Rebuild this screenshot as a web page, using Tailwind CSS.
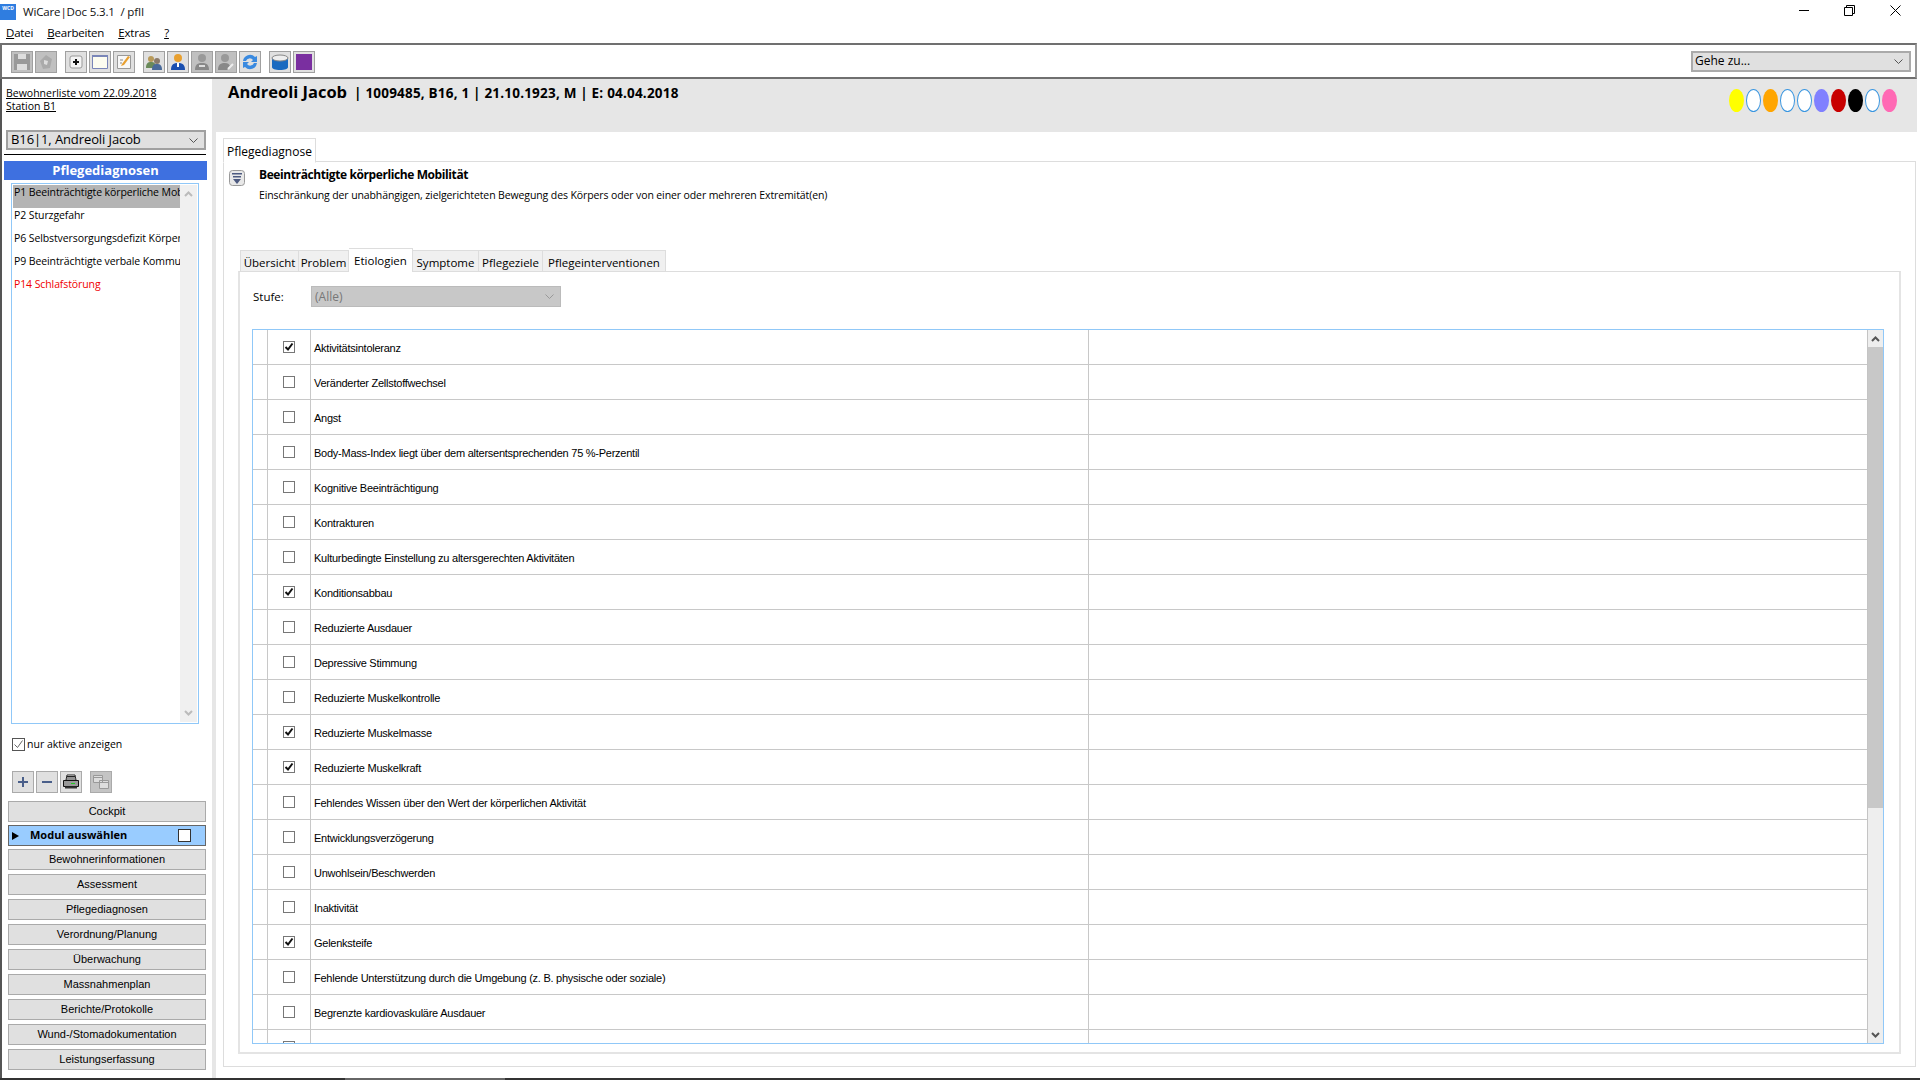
<!DOCTYPE html>
<html lang="de">
<head>
  <meta charset="UTF-8" />
  <title>WiCare|Doc</title>
  <script src="https://cdn.jsdelivr.net/npm/@tailwindcss/browser@4"></script>
</head>
<body class="w-[1920px] h-[1080px] overflow-hidden bg-white text-black font-['Open_Sans','Noto_Sans',sans-serif] text-[12px] flex flex-col">
  <!-- Title bar -->
  <div class="h-[24px] flex items-center shrink-0">
    <div class="w-[16px] h-[16px] bg-[#2f7de0] text-white text-[5px] leading-[8px] font-bold text-center">WCD</div>
    <span class="ml-[7px] text-[11.5px] tracking-[-0.15px] text-[#111]">WiCare|Doc 5.3.1&nbsp; / pfII</span>
    <div class="ml-auto flex items-center pb-[4px]">
      <div class="w-[10px] h-[1px] bg-black mr-[35px]"></div>
      <svg class="w-[11px] h-[11px] mr-[35px]" viewBox="0 0 11 11" fill="none" stroke="black"><path d="M.5 2.5h8v8h-8zM2.5 2.5v-2h8v8h-2"/></svg>
      <svg class="w-[11px] h-[11px] mr-[19px]" viewBox="0 0 11 11" fill="none" stroke="black"><path d="M.5.5l10 10M10.5.5l-10 10"/></svg>
    </div>
  </div>
  <!-- Menu -->
  <div class="h-[19px] flex items-center gap-[14px] pl-[6px] pb-[2px] text-[11.5px] tracking-[-0.2px] shrink-0">
    <span><u>D</u>atei</span><span><u>B</u>earbeiten</span><span><u>E</u>xtras</span><span><u>?</u></span>
  </div>
  <!-- Toolbar -->
  <div class="h-[36px] mr-[3px] border-2 border-[#707070] border-r-[#999] flex items-center pl-[9px] pr-[4px] gap-[2px] shrink-0">
    <div id="toolbar" class="flex items-center mt-[1px]"></div>
    <div class="ml-auto w-[220px] h-[21px] border-2 border-[#aaa] bg-[#e0e0e0] flex items-center justify-between pl-[2px] pr-[6px]">
      <span class="text-[12px]">Gehe zu...</span>
      <svg class="w-[9px] h-[5px]" viewBox="0 0 9 5" fill="none" stroke="#555"><path d="M.5.5l4 4 4-4"/></svg>
    </div>
  </div>

  <div class="flex-1 flex min-h-0 border-l-2 border-[#555]">
    <!-- Left column -->
    <aside class="w-[210px] shrink-0 flex flex-col pr-[4px]">
      <div class="pt-[8px] pl-[4px] h-[51px] text-[10.5px] leading-[13px] underline shrink-0">Bewohnerliste vom 22.09.2018<br />Station B1</div>
      <div class="ml-[4px] w-[200px] h-[20px] border-2 border-[#a0a0a0] bg-[#e0e0e0] flex items-center justify-between pl-[3px] pr-[6px] text-[13px] tracking-[-0.1px] shrink-0">
        <span>B16|1, Andreoli Jacob</span>
        <svg class="w-[9px] h-[5px]" viewBox="0 0 9 5" fill="none" stroke="#555"><path d="M.5.5l4 4 4-4"/></svg>
      </div>
      <div class="mt-[4px] ml-[2px] w-[202px] h-[1px] bg-black shrink-0"></div>
      <div class="mt-[6px] ml-[2px] w-[203px] h-[19px] bg-[#3e70e0] text-white font-bold text-[13px] leading-[18px] text-center shrink-0">Pflegediagnosen</div>
      <!-- Diagnosis list -->
      <div class="mt-[3px] ml-[9px] w-[188px] h-[541px] border border-[#90c8f8] p-[1px] flex shrink-0">
        <div class="w-[167px] text-[10.5px] tracking-[-0.1px]">
          <div class="h-[23px] bg-[#b4b4b4] pl-[1px] leading-[15px] whitespace-nowrap overflow-hidden">P1 Beeinträchtigte körperliche Mobilität</div>
          <div class="h-[23px] pl-[1px] leading-[15px] whitespace-nowrap overflow-hidden">P2 Sturzgefahr</div>
          <div class="h-[23px] pl-[1px] leading-[15px] whitespace-nowrap overflow-hidden">P6 Selbstversorgungsdefizit Körperpflege</div>
          <div class="h-[23px] pl-[1px] leading-[15px] whitespace-nowrap overflow-hidden">P9 Beeinträchtigte verbale Kommunikation</div>
          <div class="h-[23px] pl-[1px] leading-[15px] whitespace-nowrap overflow-hidden text-[#f00000]">P14 Schlafstörung</div>
        </div>
        <div class="flex-1 bg-[#f0f0f0] flex flex-col justify-between items-center py-[6px]">
          <svg class="w-[9px] h-[6px]" viewBox="0 0 9 6" fill="none" stroke="#bbb" stroke-width="2"><path d="M1 5l3.5-3.5L8 5"/></svg>
          <svg class="w-[9px] h-[6px]" viewBox="0 0 9 6" fill="none" stroke="#bbb" stroke-width="2"><path d="M1 1l3.5 3.5L8 1"/></svg>
        </div>
      </div>
      <label class="mt-[14px] ml-[10px] flex items-center h-[13px] text-[10.5px] shrink-0">
        <span class="w-[13px] h-[13px] border border-[#555] flex items-center justify-center">
          <svg class="w-[11px] h-[11px]" viewBox="0 0 11 11" fill="none" stroke="#666"><path d="M1.5 5.5l3 3 5-7"/></svg>
        </span>
        <span class="ml-[2px]">nur aktive anzeigen</span>
      </label>
      <div class="mt-[20px] ml-[10px] flex shrink-0">
        <div class="w-[22px] h-[22px] border border-[#aaa] bg-[#e0e0e0] mr-[2px] flex items-center justify-center">
          <svg class="w-[12px] h-[12px]" viewBox="0 0 12 12" fill="#4a5f8a"><path d="M5 1h2v4h4v2H7v4H5V7H1V5h4z"/></svg>
        </div>
        <div class="w-[22px] h-[22px] border border-[#aaa] bg-[#e0e0e0] mr-[2px] flex items-center justify-center">
          <svg class="w-[12px] h-[12px]" viewBox="0 0 12 12" fill="#4a5f8a"><path d="M1 5h10v2H1z"/></svg>
        </div>
        <div class="w-[22px] h-[22px] border border-[#aaa] bg-[#e0e0e0] mr-[8px] flex items-center justify-center">
          <svg class="w-[18px] h-[16px]" viewBox="0 0 18 16"><path d="M5 1h8l1 5H4z" fill="#fff" stroke="#222"/><path d="M5 2.500h8M5 4h8" stroke="#222"/><path d="M1.500 6.500h15v6h-15z" fill="#999" stroke="#111"/><path d="M3 12.500h12v2H3z" fill="#333"/><path d="M9 9h4v1H9z" fill="#2c2"/></svg>
        </div>
        <div class="w-[22px] h-[22px] border border-[#aaa] bg-[#c4c4c4] flex items-center justify-center">
          <svg class="w-[16px] h-[14px]" viewBox="0 0 16 14" fill="#ddd" stroke="#999"><path d="M.5.500h9v7h-9zM6.500 5.500h9v8h-9z"/><path d="M.5 2.500h9M6.500 7.500h9"/></svg>
        </div>
      </div>
      <!-- Module buttons -->
      <div class="mt-[8px] ml-[6px] w-[198px] flex flex-col gap-[4px] text-[11px] font-['Liberation_Sans',sans-serif]">
        <div class="h-[21px] -mb-[1px] border border-[#aaa] bg-[#e0e0e0] leading-[19px] text-center">Cockpit</div>
        <div class="h-[21px] -mb-[1px] border border-[#666] bg-[#99ccff] flex items-center font-bold font-['Open_Sans',sans-serif] text-[11px] pl-[3px]">
          <svg class="w-[7px] h-[8px]" viewBox="0 0 7 8"><path d="M0 0l7 4-7 4z" /></svg>
          <span class="ml-[11px]">Modul auswählen</span>
          <span class="ml-auto mr-[14px] w-[13px] h-[13px] bg-white border border-[#333]"></span>
        </div>
        <div class="h-[21px] border border-[#aaa] bg-[#e0e0e0] leading-[19px] text-center">Bewohnerinformationen</div>
        <div class="h-[21px] border border-[#aaa] bg-[#e0e0e0] leading-[19px] text-center">Assessment</div>
        <div class="h-[21px] border border-[#aaa] bg-[#e0e0e0] leading-[19px] text-center">Pflegediagnosen</div>
        <div class="h-[21px] border border-[#aaa] bg-[#e0e0e0] leading-[19px] text-center">Verordnung/Planung</div>
        <div class="h-[21px] border border-[#aaa] bg-[#e0e0e0] leading-[19px] text-center">Überwachung</div>
        <div class="h-[21px] border border-[#aaa] bg-[#e0e0e0] leading-[19px] text-center">Massnahmenplan</div>
        <div class="h-[21px] border border-[#aaa] bg-[#e0e0e0] leading-[19px] text-center">Berichte/Protokolle</div>
        <div class="h-[21px] border border-[#aaa] bg-[#e0e0e0] leading-[19px] text-center">Wund-/Stomadokumentation</div>
        <div class="h-[21px] border border-[#aaa] bg-[#e0e0e0] leading-[19px] text-center">Leistungserfassung</div>
      </div>
    </aside>

    <!-- Main column -->
    <main class="flex-1 flex flex-col min-w-0 border-l-4 border-[#e6e6e6] mr-[3px]">
      <div class="h-[53px] -ml-[4px] bg-[#e6e6e6] relative shrink-0 pl-[16px] pt-[1px] flex items-baseline whitespace-nowrap font-bold">
        <span class="text-[16.5px]">Andreoli Jacob</span>
        <span class="ml-[7px] text-[13.5px] tracking-[0.2px]">| 1009485, B16, 1 | 21.10.1923, M | E: 04.04.2018</span>
        <div class="absolute right-[20px] top-[10px] flex gap-[2px]">
          <span class="w-[15px] h-[23px] rounded-[50%] bg-[#ffff00]"></span>
          <span class="w-[15px] h-[23px] rounded-[50%] bg-white border border-[#3a96e0]"></span>
          <span class="w-[15px] h-[23px] rounded-[50%] bg-[#ffa500]"></span>
          <span class="w-[15px] h-[23px] rounded-[50%] bg-white border border-[#3a96e0]"></span>
          <span class="w-[15px] h-[23px] rounded-[50%] bg-white border border-[#3a96e0]"></span>
          <span class="w-[15px] h-[23px] rounded-[50%] bg-[#8080ff]"></span>
          <span class="w-[15px] h-[23px] rounded-[50%] bg-[#c80000]"></span>
          <span class="w-[15px] h-[23px] rounded-[50%] bg-black"></span>
          <span class="w-[15px] h-[23px] rounded-[50%] bg-white border border-[#3a96e0]"></span>
          <span class="w-[15px] h-[23px] rounded-[50%] bg-[#ff69b4]"></span>
        </div>
      </div>
      <!-- Outer tab page -->
      <div class="flex-1 min-h-0 pl-[7px] pr-[1px] pt-[6px] pb-[11px] flex flex-col">
        <div class="h-[24px] flex shrink-0">
          <div class="w-[93px] h-[25px] border border-[#ddd] border-b-white bg-white px-[3px] leading-[25px] relative z-10">Pflegediagnose</div>
          <div class="flex-1 border-b border-[#ddd]"></div>
        </div>
        <div class="flex-1 min-h-0 border border-t-0 border-[#ddd] flex flex-col pl-[14px] pr-[14px] pb-[12px]">
          <div class="h-[85px] shrink-0 -ml-[14px] pl-[5px] pt-[5px] flex">
            <svg class="w-[16px] h-[16px] mt-[3px]" viewBox="0 0 16 16"><rect x=".5" y=".5" width="15" height="15" rx="3" fill="#e8e8e8" stroke="#999"/><path d="M3 3h10v1.500H3zM4 6h8v1.500H4z" fill="#4d5a80"/><path d="M4 9h8l-4 5z" fill="#4d5a80"/></svg>
            <div class="ml-[14px]">
              <div class="font-bold text-[12px] tracking-[-0.4px] leading-[16px]">Beeinträchtigte körperliche Mobilität</div>
              <div class="mt-[4px] text-[10.5px] tracking-[-0.11px] leading-[16px]">Einschränkung der unabhängigen, zielgerichteten Bewegung des Körpers oder von einer oder mehreren Extremität(en)</div>
            </div>
          </div>
          <!-- Inner tabs -->
          <div class="h-[24px] flex items-end shrink-0 text-[11.5px] text-center pl-[2px]">
            <div class="w-[59px] h-[21px] bg-[#f0f0f0] border border-[#ddd] border-b-0 leading-[23px]">Übersicht</div>
            <div class="w-[50px] h-[21px] bg-[#f0f0f0] border border-[#ddd] border-b-0 border-l-0 leading-[23px]">Problem</div>
            <div class="w-[64px] h-[24px] -mb-[1px] bg-white border border-[#ddd] border-b-0 border-l-0 leading-[23px] relative z-10">Etiologien</div>
            <div class="w-[66px] h-[21px] bg-[#f0f0f0] border border-[#ddd] border-b-0 border-l-0 leading-[23px]">Symptome</div>
            <div class="w-[64px] h-[21px] bg-[#f0f0f0] border border-[#ddd] border-b-0 border-l-0 leading-[23px]">Pflegeziele</div>
            <div class="w-[123px] h-[21px] bg-[#f0f0f0] border border-[#ddd] border-b-0 border-l-0 leading-[23px]">Pflegeinterventionen</div>
          </div>
          <div class="flex-1 min-h-0 border-2 border-[#e4e4e4] border-t-[#ddd] border-t flex flex-col pl-[12px] pr-[15px] pb-[8px]">
            <div class="h-[57px] shrink-0 pt-[14px] flex items-start">
              <span class="w-[59px] leading-[21px] pl-[1px] text-[11.5px]">Stufe:</span>
              <div class="w-[250px] h-[21px] bg-[#c8c8c8] border border-[#bbb] flex items-center justify-between pl-[3px] pr-[6px] text-[#777]">
                <span>(Alle)</span>
                <svg class="w-[9px] h-[5px]" viewBox="0 0 9 5" fill="none" stroke="#999"><path d="M.5.5l4 4 4-4"/></svg>
              </div>
            </div>
            <!-- Etiology grid -->
            <div class="flex-1 min-h-0 border border-[#90c8f8] flex overflow-hidden">
              <div id="rows" class="flex-1 min-w-0 overflow-hidden"></div>
              <div class="w-[16px] shrink-0 bg-[#eeeeee] border-l border-[#c4c4c4] flex flex-col items-center">
                <svg class="w-[9px] h-[6px] mt-[6px]" viewBox="0 0 9 6" fill="none" stroke="#555" stroke-width="2"><path d="M1 5l3.500-3.500L8 5"/></svg>
                <div class="mt-[5px] w-full h-[461px] bg-[#c8c8c8]"></div>
                <svg class="w-[9px] h-[6px] mt-auto mb-[5px]" viewBox="0 0 9 6" fill="none" stroke="#555" stroke-width="2"><path d="M1 1l3.500 3.500L8 1"/></svg>
              </div>
            </div>
          </div>
        </div>
      </div>
    </main>
  </div>
  <!-- Bottom edge -->
  <div class="h-[2px] flex shrink-0 bg-[#333]">
    <div class="ml-[345px] w-[160px] bg-[#666]"></div>
  </div>

  <script>
    // Toolbar buttons: gap before each, fill of the button, and the icon inside
    const toolbarIcons = [
      { gap: 0, bg: 'bg-[#c0c0c0]', icon: '<path d="M3 3h16v16H3z" fill="#999"/><path d="M7 3h8v5H7zM6 13h10v6H6z" fill="#ddd"/>' },
      { gap: 2, bg: 'bg-[#c0c0c0]', icon: '<path d="M5 10l6-6 6 4-2 9-7 1z" fill="#aaa"/><path d="M9 9l4 1-1 4-3-1z" fill="#ddd"/>' },
      { gap: 8, bg: 'bg-[#e0e0e0]', icon: '<rect x="5" y="5" width="12" height="12" rx="2" fill="#f4f4f4" stroke="#999"/><path d="M10 8h2v2h2v2h-2v2h-2v-2H8v-2h2z" fill="#111"/>' },
      { gap: 2, bg: 'bg-[#e0e0e0]', icon: '<path d="M3.500 4.500h15v13h-15z" fill="#fdfdf0" stroke="#7a86b8"/><path d="M3 4h16v2H3z" fill="#7a86b8"/>' },
      { gap: 2, bg: 'bg-[#e0e0e0]', icon: '<path d="M4.500 4.500h13v13h-13z" fill="#f8f8f8" stroke="#999"/><path d="M9 13l6-8 2 1-6 8-3 1z" fill="#e8a030"/><path d="M7 9h3M7 12h2" stroke="#888"/>' },
      { gap: 8, bg: 'bg-[#e0e0e0]', icon: '<circle cx="8" cy="8" r="3" fill="#b89a5a"/><path d="M3 17c0-5 2-6 5-6s5 1 5 6z" fill="#6a8a5a"/><circle cx="14" cy="10" r="3" fill="#8a7a6a"/><path d="M9 19c0-5 2-6 5-6s5 1 5 6z" fill="#4a6a9a"/>' },
      { gap: 2, bg: 'bg-[#e0e0e0]', icon: '<circle cx="11" cy="7" r="4" fill="#e8a030"/><path d="M4 19c0-6 3-7 7-7s7 1 7 7z" fill="#1a4fb0"/><path d="M10 12h2v4h-2z" fill="#fff"/>' },
      { gap: 2, bg: 'bg-[#c0c0c0]', icon: '<circle cx="11" cy="7" r="4" fill="#999"/><path d="M4 19c0-6 3-7 7-7s7 1 7 7z" fill="#888"/><path d="M8 14h6v2H8z" fill="#ddd"/>' },
      { gap: 2, bg: 'bg-[#c0c0c0]', icon: '<circle cx="10" cy="7" r="4" fill="#999"/><path d="M3 19c0-6 3-7 7-7 3 0 4 1 5 3l-3 4z" fill="#888"/><path d="M13 18l5-5" stroke="#eee" stroke-width="2"/>' },
      { gap: 2, bg: 'bg-[#e0e0e0]', icon: '<path d="M4 10a7 7 0 0 1 12-4l2-1v6h-6l2-2a4 4 0 0 0-7 1z" fill="#3a8ae0"/><path d="M18 12a7 7 0 0 1-12 4l-2 1v-6h6l-2 2a4 4 0 0 0 7-1z" fill="#3a8ae0"/>' },
      { gap: 8, bg: 'bg-[#e0e0e0]', icon: '<path d="M3 7h16v9c0 2-3 3-8 3s-8-1-8-3z" fill="#1a6ac0"/><ellipse cx="11" cy="7" rx="8" ry="3" fill="#eee" stroke="#888"/>' },
      { gap: 2, bg: 'bg-[#e0e0e0]', icon: '<path d="M3 3h16v16H3z" fill="#7a2fa0"/>' }
    ];
    const gapClasses = { 0: 'ml-0', 2: 'ml-[2px]', 8: 'ml-[8px]' };
    document.getElementById('toolbar').innerHTML = toolbarIcons.map(b =>
      `<div class="w-[22px] h-[22px] border border-[#a0a0a0] flex items-center justify-center ${b.bg} ${gapClasses[b.gap]}"><svg class="w-[20px] h-[20px]" viewBox="1 1 20 20">${b.icon}</svg></div>`
    ).join('');

    // Etiology rows: [label, checked]
    const etiologies = [
      ['Aktivitätsintoleranz', true],
      ['Veränderter Zellstoffwechsel', false],
      ['Angst', false],
      ['Body-Mass-Index liegt über dem altersentsprechenden 75 %-Perzentil', false],
      ['Kognitive Beeinträchtigung', false],
      ['Kontrakturen', false],
      ['Kulturbedingte Einstellung zu altersgerechten Aktivitäten', false],
      ['Konditionsabbau', true],
      ['Reduzierte Ausdauer', false],
      ['Depressive Stimmung', false],
      ['Reduzierte Muskelkontrolle', false],
      ['Reduzierte Muskelmasse', true],
      ['Reduzierte Muskelkraft', true],
      ['Fehlendes Wissen über den Wert der körperlichen Aktivität', false],
      ['Entwicklungsverzögerung', false],
      ['Unwohlsein/Beschwerden', false],
      ['Inaktivität', false],
      ['Gelenksteife', true],
      ['Fehlende Unterstützung durch die Umgebung (z. B. physische oder soziale)', false],
      ['Begrenzte kardiovaskuläre Ausdauer', false],
      ['Lymphödem der betroffenen Seite', false]
    ];
    const tick = '<svg class="w-[10px] h-[10px]" viewBox="0 0 10 10" fill="none" stroke="#111" stroke-width="2"><path d="M1.500 5l2.500 2.500 4.500-6"/></svg>';
    document.getElementById('rows').innerHTML = etiologies.map(([label, checked]) => `
      <div class="h-[35px] flex border-b border-[#c8c8c8]">
        <div class="w-[15px] shrink-0 border-r border-[#c8c8c8]"></div>
        <div class="w-[43px] shrink-0 border-r border-[#c8c8c8] pl-[15px] pt-[11px]">
          <div class="w-[12px] h-[12px] border border-[#777] flex items-center justify-center">${checked ? tick : ''}</div>
        </div>
        <div class="w-[778px] shrink-0 border-r border-[#c8c8c8] pl-[3px] pt-[9px] text-[11px] tracking-[-0.25px] leading-[18px] font-['Liberation_Sans',sans-serif] whitespace-nowrap">${label}</div>
        <div class="flex-1"></div>
      </div>`).join('');
  </script>
</body>
</html>
